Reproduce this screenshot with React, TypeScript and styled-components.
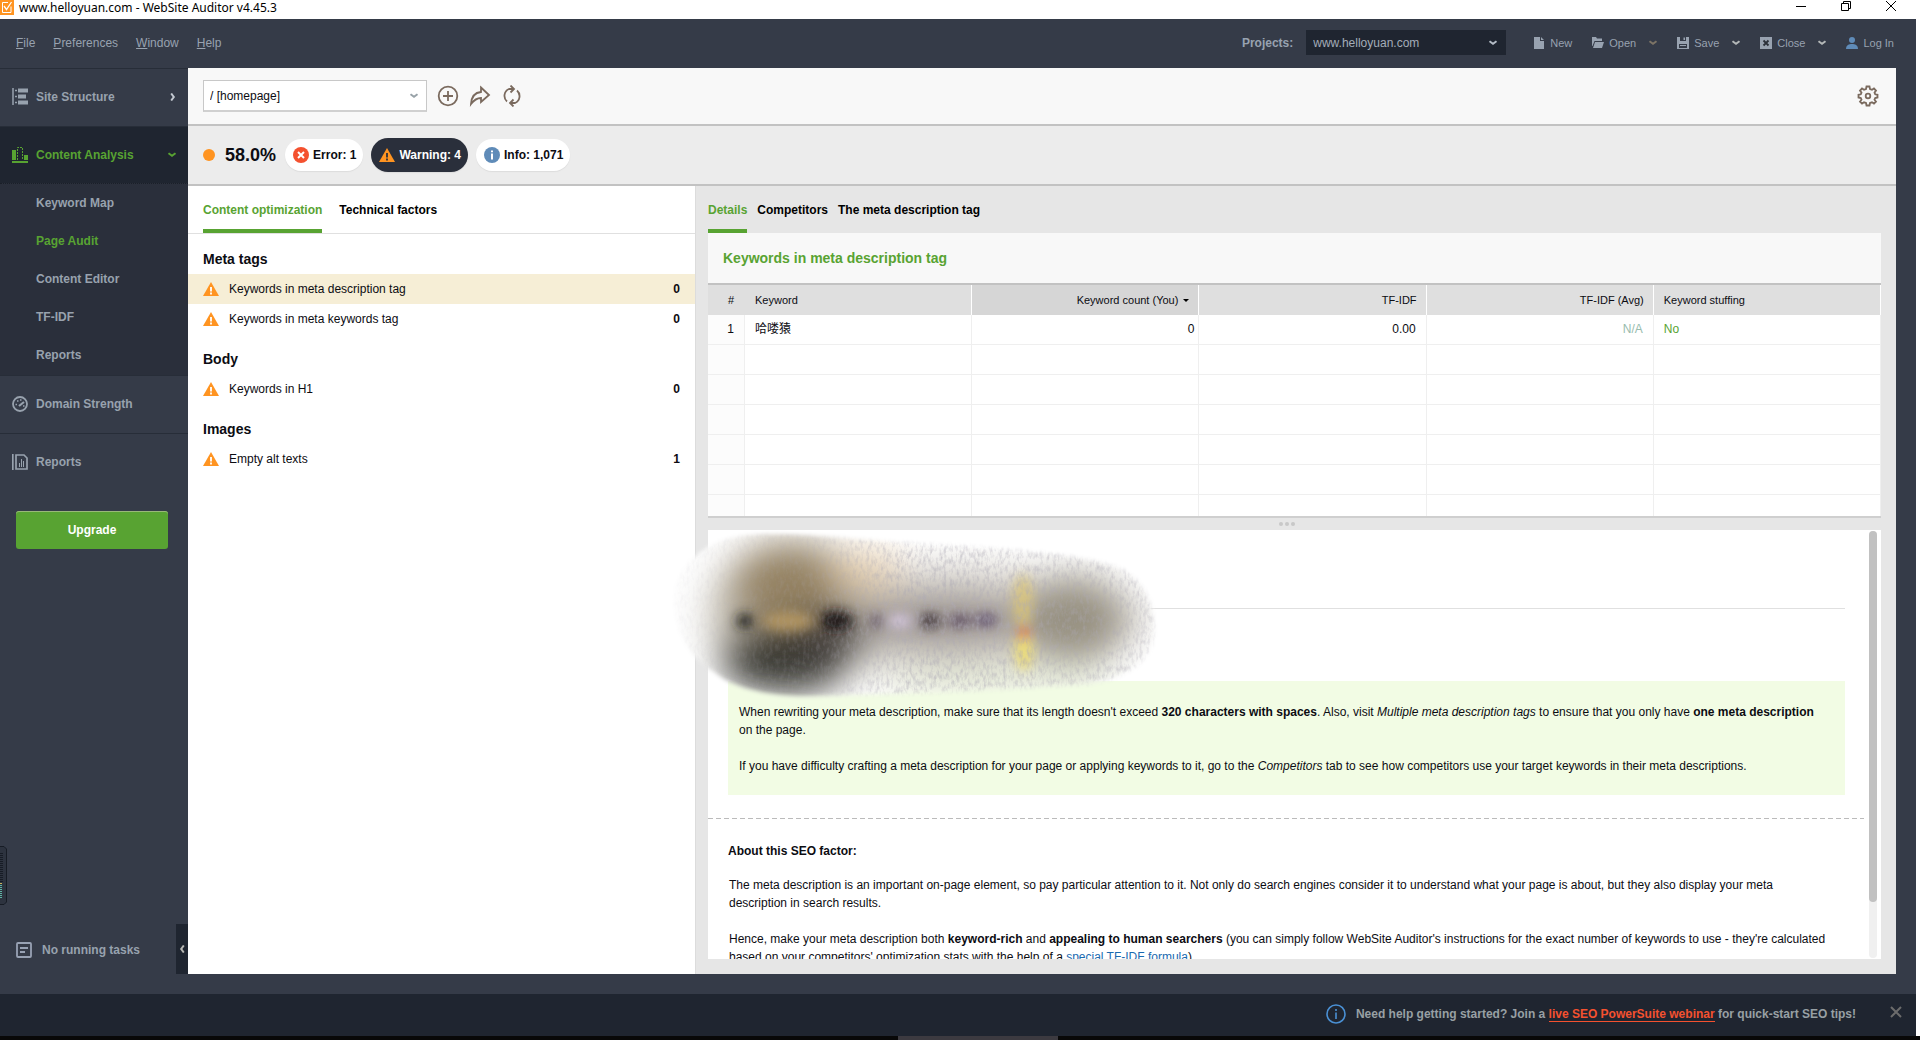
import React from "react";
import styled, { createGlobalStyle, css } from "styled-components";

const Global = createGlobalStyle`
  * { box-sizing: border-box; }
  html, body, #root { height: 100%; }
  body {
    margin: 0;
    font-family: "Liberation Sans", "Noto Sans CJK SC", sans-serif;
    font-size: 12px;
    line-height: 18px;
    color: #0c0c12;
    overflow: hidden;
  }
  button, select { font: inherit; color: inherit; }
  button { background: none; border: 0; padding: 0; cursor: pointer; }
  h2, h3, p { margin: 0; }
`;

const Window = styled.div`
  display: flex;
  flex-direction: column;
  height: 100vh;
  padding-right: 4px;
  background: #fff;
`;

/* ---------- title bar ---------- */
const TitleBar = styled.header`
  display: flex;
  align-items: center;
  flex: none;
  height: 19px;
  padding-bottom: 4px;
  background: #fff;
  font-family: "Noto Sans", sans-serif;
  font-size: 12px;
`;
const AppName = styled.span`
  flex: 1;
  padding-left: 5px;
  color: #000;
`;
const WindowButtons = styled.div`
  display: flex;
  gap: 33px;
  padding: 0 19px 3px 0;
  button { display: flex; }
`;

/* ---------- top bar ---------- */
const Shell = styled.div`
  flex: 1;
  min-height: 0;
  display: flex;
  flex-direction: column;
  background: #353b48;
`;
const TopBar = styled.div`
  flex: none;
  display: flex;
  align-items: center;
  justify-content: space-between;
  height: 49px;
  padding: 0 22px 2px 16px;
  color: #98a2b0;
`;
const Menu = styled.nav`
  display: flex;
  gap: 18px;
  font-size: 12px;
  button::first-letter { text-decoration: underline; }
`;
const TopTools = styled.div`
  display: flex;
  align-items: center;
  gap: 27px;
  font-size: 11px;
`;
const Project = styled.div`
  display: flex;
  align-items: center;
  gap: 13px;
`;
const ProjectLabel = styled.label`
  font-size: 12px;
  font-weight: bold;
`;
const SelectBox = styled.div<{ $dark?: boolean }>`
  position: relative;
  width: ${(p) => (p.$dark ? 200 : 224)}px;
  svg { position: absolute; right: 9px; top: calc(50% - 3px); pointer-events: none; }
  select {
    display: block;
    width: 100%;
    appearance: none;
    outline: none;
    border-radius: 0;
    font-size: 12px;
    ${(p) =>
      p.$dark
        ? css`height: 25px; padding: 0 7px; background: #1f2530; border: 0; color: #a4adb9;`
        : css`height: 32px; padding: 0 6px; background: #fff; border: 1px solid #c8c8c8; border-bottom: 2px solid #d0d0d0;`}
  }
`;
const ToolRow = styled.div`
  display: flex;
  align-items: center;
  gap: 20px;
`;
const ToolGroup = styled.div`
  display: flex;
  align-items: center;
  gap: 13px;
`;
const ToolButton = styled.button`
  display: flex;
  align-items: center;
  gap: 5px;
`;
const BareButton = styled.button`
  display: flex;
`;

/* ---------- body ---------- */
const Body = styled.div`
  flex: 1;
  min-height: 0;
  display: flex;
  padding: 0 20px 20px 0;
`;
const Sidebar = styled.aside`
  position: relative;
  flex: none;
  width: 188px;
  display: flex;
  flex-direction: column;
  color: #98a2ae;
  font-weight: bold;
`;
const NavItem = styled.button<{ $active?: boolean }>`
  flex: none;
  display: flex;
  align-items: center;
  gap: 8px;
  height: 58px;
  padding: 0 12px 2px 12px;
  border-top: 1px solid #272d38;
  font-weight: bold;
  text-align: left;
  span { flex: 1; }
  ${(p) => p.$active && css`background: #1f2530; color: #58a332; height: 57px; padding-bottom: 0;`}
`;
const SubNav = styled.nav`
  display: flex;
  flex-direction: column;
  padding-bottom: 1px;
  background: #2a2f3b;
  border-top: 1px dotted #1a1f28;
`;
const SubItem = styled.button<{ $active?: boolean }>`
  height: 38px;
  padding: 0 0 0 36px;
  font-weight: bold;
  text-align: left;
  color: ${(p) => (p.$active ? "#58a332" : "inherit")};
`;
const Upgrade = styled.button`
  margin: 20px 20px 0 16px;
  height: 38px;
  border-radius: 3px;
  box-shadow: inset 0 1px #98b878;
  background: #58a332;
  color: #fff;
  font-weight: bold;
`;
const SidebarFoot = styled.div`
  display: flex;
  margin-top: auto;
  height: 50px;
`;
const Tasks = styled.div`
  flex: 1;
  display: flex;
  align-items: center;
  gap: 10px;
  padding: 2px 0 0 16px;
`;
const Collapse = styled.button`
  display: flex;
  align-items: center;
  justify-content: center;
  width: 12px;
  background: #1f2530;
`;
const Gadget = styled.svg`
  position: absolute;
  left: 0;
  bottom: 69px;
`;

/* ---------- workspace ---------- */
const Workspace = styled.main`
  flex: 1;
  min-width: 0;
  display: flex;
  flex-direction: column;
  background: #fff;
`;
const Toolbar = styled.div`
  flex: none;
  display: flex;
  align-items: center;
  gap: 10px;
  height: 58px;
  padding: 0 17px 0 15px;
  background: #f8f8f8;
  border-bottom: 2px solid #c2c2c2;
  ${BareButton}:last-child { margin-left: auto; }
`;
const Summary = styled.div`
  flex: none;
  display: flex;
  align-items: center;
  height: 60px;
  padding-left: 15px;
  background: #ececec;
  border-bottom: 2px solid #c2c2c2;
`;
const Dot = styled.i`
  width: 12px;
  height: 12px;
  border-radius: 50%;
  background: #ff9421;
`;
const Score = styled.strong`
  margin: 0 9px 0 10px;
  font-size: 18px;
`;
const Pill = styled.button<{ $dark?: boolean }>`
  display: flex;
  align-items: center;
  gap: 4px;
  height: ${(p) => (p.$dark ? 34 : 32)}px;
  margin-right: 8px;
  padding: 0 7px 0 8px;
  border-radius: 17px;
  font-weight: bold;
  background: ${(p) => (p.$dark ? "#2a2f3b" : "#fff")};
  color: ${(p) => (p.$dark ? "#fff" : "#0c0c12")};
  box-shadow: 0 1px 1px #ddd;
`;
const Columns = styled.div`
  flex: 1;
  min-height: 0;
  display: flex;
`;
const Factors = styled.section`
  flex: none;
  width: 507px;
`;
const Tabs = styled.div<{ $tight?: boolean }>`
  display: flex;
  flex: none;
  gap: ${(p) => (p.$tight ? 10 : 17)}px;
  height: ${(p) => (p.$tight ? 47 : 48)}px;
  padding-left: ${(p) => (p.$tight ? 0 : 15)}px;
  border-bottom: ${(p) => (p.$tight ? "0" : "1px solid #e0e0e0")};
`;
const Tab = styled.button<{ $active?: boolean }>`
  font-weight: bold;
  height: 47px;
  padding-top: 5px;
  color: ${(p) => (p.$active ? "#58a332" : "#000")};
  border-bottom: 4px solid ${(p) => (p.$active ? "#58a332" : "transparent")};
`;
const GroupTitle = styled.h2`
  height: 40px;
  padding: 10px 0 0 15px;
  font-size: 14px;
  line-height: 30px;
`;
const FactorRow = styled.button<{ $active?: boolean }>`
  display: flex;
  align-items: center;
  gap: 10px;
  width: 100%;
  height: 30px;
  padding: 0 15px 1px;
  text-align: left;
  background: ${(p) => (p.$active ? "#f6eed6" : "#fff")};
  span { flex: 1; }
`;
const Details = styled.section`
  flex: 1;
  min-width: 0;
  display: flex;
  flex-direction: column;
  padding: 0 15px 15px 12px;
  background: #e6e6e6;
  border-left: 1px solid #dcdcdc;
`;
const CardTitle = styled.h2`
  flex: none;
  height: 52px;
  padding-left: 15px;
  font-size: 14px;
  line-height: 50px;
  color: #58a332;
  background: #f8f8f8;
  border-bottom: 2px solid #c2c2c2;
`;
const TableWrap = styled.div`
  flex: none;
  height: 233px;
  overflow: hidden;
  background: #fff;
  border-bottom: 2px solid #cfcfcf;
`;
const Grid = styled.table`
  width: 100%;
  table-layout: fixed;
  border-collapse: separate;
  border-spacing: 0;
  th, td {
    height: 30px;
    padding: 0 10px;
    text-align: left;
    border-right: 1px solid #efefef;
  }
  td { padding-bottom: 2px; border-bottom: 1px solid #efefef; }
  th { background: #dfdfdf; font-size: 11px; font-weight: normal; border-right-color: #fff; }
  th:first-child, td:first-child { width: 37px; text-align: right; }
  th:first-child { border-right-color: #dfdfdf; }
  td:first-child { background: #fcfcfc; }
`;
const Num = styled.td<{ $muted?: boolean; $last?: boolean }>`
  && { text-align: right; padding-right: ${(p) => (p.$last ? 4 : 10)}px; color: ${(p) => (p.$muted ? "#98bcae" : "inherit")}; }
`;
const NumHead = styled.th<{ $sorted?: boolean }>`
  && { text-align: right; padding-right: 9px; background: ${(p) => (p.$sorted ? "#d6d6d6" : "#dfdfdf")}; }
  svg { margin-left: 5px; vertical-align: 2px; }
`;
const Good = styled.td`
  color: #58a332;
`;
const Splitter = styled.div`
  flex: none;
  display: flex;
  align-items: center;
  justify-content: center;
  gap: 2px;
  height: 12px;
  padding-right: 15px;
  i { width: 4px; height: 4px; border-radius: 50%; background: #c8c8c8; }
`;
const Advice = styled.div`
  position: relative;
  flex: 1;
  min-height: 0;
  display: flex;
  background: #fff;
`;
const Article = styled.article`
  flex: 1;
  min-width: 0;
  overflow: hidden;
`;
const Lead = styled.div`
  height: 79px;
  margin: 0 19px 72px 20px;
  border-bottom: 1px solid #e0e0e0;
`;
const Tip = styled.div`
  margin: 0 19px 23px 20px;
  padding: 22px 20px 20px 11px;
  background: #f2fce4;
  p + p { margin-top: 18px; }
`;
const About = styled.div`
  padding: 23px 34px 0 20px;
  h3 { font-size: 12px; margin-bottom: 16px; }
  p { padding-left: 1px; margin-bottom: 18px; }
  a { color: #1a6ab0; text-decoration: none; }
`;
const Dashes = styled.hr`
  height: 1px;
  margin: 0;
  border: 0;
  background: repeating-linear-gradient(90deg, #bbb 0 5px, transparent 5px 8px);
`;
const Track = styled.div`
  flex: none;
  width: 8px;
  margin: 1px 4px 1px 5px;
  border-radius: 4px;
  background: #f0f0f0;
`;
const Thumb = styled.div`
  height: 87%;
  border-radius: 4px;
  background: #c1c1c1;
`;
const Smudge = styled.svg`
  position: absolute;
  left: -38px;
  top: 0;
  pointer-events: none;
`;

/* ---------- footer ---------- */
const Footer = styled.footer`
  flex: none;
  display: flex;
  align-items: center;
  justify-content: flex-end;
  gap: 10px;
  height: 42px;
  padding: 0 14px 2px 0;
  background: #1f2530;
  color: #98a0a4;
  font-weight: bold;
  a { color: #f4512f; text-decoration: none; border-bottom: 1px solid #f4512f; }
  button { margin-left: 24px; }
`;
const Dock = styled.div`
  flex: none;
  display: flex;
  justify-content: center;
  height: 4px;
  background: #080808;
  margin-right: -4px;
  padding-left: 36px;
  i { width: 160px; background: #3c3a40; }
`;

/* ---------- icons ---------- */
const Chevron = ({ color = "#98a2ae", dir = "down" }: { color?: string; dir?: "down" | "right" | "left" }) => {
  if (dir === "down") {
    return (
      <svg width="8" height="6" viewBox="0 0 8 6">
        <path d="M0.500 1.200 L4 3.800 L7.500 1.200" fill="none" stroke={color} strokeWidth="2" />
      </svg>
    );
  }
  return (
    <svg width="6" height="8" viewBox="0 0 6 8">
      <path d={dir === "right" ? "M1.200 .5 L3.800 4 L1.200 7.500" : "M4.800 .5 L2.200 4 L4.800 7.500"} fill="none" stroke={color} strokeWidth="2" />
    </svg>
  );
};
const WarnIcon = () => (
  <svg width="16" height="14" viewBox="0 0 16 14">
    <path d="M8 0 L16 14 H0 Z" fill="#ff9421" />
    <path d="M8 5 V9.400 M8 10.600 V12.400" stroke="currentColor" strokeWidth="1.800" />
  </svg>
);

const WarnMark = styled.i<{ $dark?: boolean }>`
  display: flex;
  color: ${(p) => (p.$dark ? "#2a2f3b" : "#fff")};
`;

const AppLogo = () => (
  <svg width="14" height="15" viewBox="0 0 14 15">
    <rect width="14" height="15" fill="#ff9421" />
    <path d="M11 6.500 V12.500 H2.500 V2.500 H8" fill="none" stroke="#fff" />
    <path d="M4 6 L6.500 9.500 L11.500 2" fill="none" stroke="#fff" strokeWidth="1.300" />
  </svg>
);

const emptyRows = [0, 1, 2, 3, 4, 5];
const groups = [
  { title: "Meta tags", rows: [["Keywords in meta description tag", "0"], ["Keywords in meta keywords tag", "0"]] },
  { title: "Body", rows: [["Keywords in H1", "0"]] },
  { title: "Images", rows: [["Empty alt texts", "1"]] },
];

export default function App() {
  return (
    <Window>
      <Global />
      <TitleBar>
        <AppLogo />
        <AppName>www.helloyuan.com - WebSite Auditor v4.45.3</AppName>
        <WindowButtons>
          <button aria-label="Minimize">
            <svg width="12" height="12"><path d="M1 6.500 H11" stroke="#000" /></svg>
          </button>
          <button aria-label="Restore">
            <svg width="12" height="12"><path d="M1.500 3.500 H8.500 V10.500 H1.500 Z M3.500 3 V1.500 H10.500 V8.500 H9" fill="none" stroke="#000" /></svg>
          </button>
          <button aria-label="Close window">
            <svg width="12" height="12"><path d="M1 1 L11 11 M11 1 L1 11" stroke="#000" /></svg>
          </button>
        </WindowButtons>
      </TitleBar>

      <Shell>
        <TopBar>
          <Menu>
            <button>File</button>
            <button>Preferences</button>
            <button>Window</button>
            <button>Help</button>
          </Menu>
          <TopTools>
            <Project>
              <ProjectLabel htmlFor="project">Projects:</ProjectLabel>
              <SelectBox $dark>
                <select id="project"><option>www.helloyuan.com</option></select>
                <Chevron color="#b4bcc6" />
              </SelectBox>
            </Project>
            <ToolRow>
              <ToolButton>
                <svg width="12" height="12" viewBox="0 0 12 12"><path d="M1 0 H7 V4 H11 V12 H1 Z M8 0 L11 3 H8 Z" fill="#98a2b0" /></svg>
                New
              </ToolButton>
              <ToolGroup>
                <ToolButton>
                  <svg width="12" height="11" viewBox="0 0 12 11"><path d="M0 0 H4 L5 1.500 H10 V4 H2.500 L0.500 9 H0 Z M3 5 H12 L10 11 H1 Z" fill="#98a2b0" /></svg>
                  Open
                </ToolButton>
                <BareButton aria-label="Open recent"><Chevron color="#7d7466" /></BareButton>
              </ToolGroup>
              <ToolGroup>
                <ToolButton>
                  <svg width="12" height="12" viewBox="0 0 12 12"><path fillRule="evenodd" d="M0 0 H12 V12 H0 Z M2 7 V11 H10 V7 Z M3 0 V4 H9 V0 Z" fill="#98a2b0" /><path d="M6.500 .5 H8 V3 H6.500 Z M3 8 H9 V9 H3 Z" fill="#98a2b0" /></svg>
                  Save
                </ToolButton>
                <BareButton aria-label="Save options"><Chevron color="#b4b8b8" /></BareButton>
              </ToolGroup>
              <ToolGroup>
                <ToolButton>
                  <svg width="12" height="12" viewBox="0 0 12 12"><rect width="12" height="12" fill="#98a2b0" /><path d="M3.500 3.500 L8.500 8.500 M8.500 3.500 L3.500 8.500" stroke="#2b3039" strokeWidth="1.800" /></svg>
                  Close
                </ToolButton>
                <BareButton aria-label="Close options"><Chevron color="#b4b8b8" /></BareButton>
              </ToolGroup>
              <ToolButton>
                <svg width="12" height="12" viewBox="0 0 12 12"><circle cx="6" cy="3" r="3" fill="#5f8bb8" /><path d="M0 12 C0 8 3 7 6 7 S12 8 12 12 Z" fill="#5f8bb8" /></svg>
                Log In
              </ToolButton>
            </ToolRow>
          </TopTools>
        </TopBar>

        <Body>
          <Sidebar>
            <NavItem>
              <svg width="16" height="17" viewBox="0 0 16 17"><path d="M1 0 V17 M3 2.500 H5 M3 8.500 H5 M3 14.500 H5" stroke="#98a2ae" strokeWidth="1.500" /><path d="M6 .5 H16 V4.500 H6 Z M6 6.500 H14 V10.500 H6 Z M6 12.500 H16 V16.500 H6 Z" fill="#98a2ae" /></svg>
              <span>Site Structure</span>
              <Chevron color="#c4cad2" dir="right" />
            </NavItem>
            <NavItem $active>
              <svg width="16" height="16" viewBox="0 0 16 16"><path d="M0 3 H4 V13 H0 Z M12 8 H16 V13 H12 Z M0 14 H16 V16 H0 Z" fill="#58a332" /><path d="M5.500 13 V.5 H10.500 V13" fill="none" stroke="#58a332" strokeDasharray="2 1" /></svg>
              <span>Content Analysis</span>
              <Chevron color="#58a332" />
            </NavItem>
            <SubNav>
              <SubItem>Keyword Map</SubItem>
              <SubItem $active>Page Audit</SubItem>
              <SubItem>Content Editor</SubItem>
              <SubItem>TF-IDF</SubItem>
              <SubItem>Reports</SubItem>
            </SubNav>
            <NavItem>
              <svg width="16" height="16" viewBox="0 0 16 16"><circle cx="8" cy="8" r="7" fill="none" stroke="#98a2ae" strokeWidth="1.800" /><path d="M7 10 L12 6" stroke="#98a2ae" strokeWidth="2.200" /><path d="M3.500 8.500 h1.500 M5 5 h1.500 M8 4 h1.500 M11 10 h1.500" stroke="#98a2ae" strokeWidth="1.400" /></svg>
              <span>Domain Strength</span>
            </NavItem>
            <NavItem>
              <svg width="16" height="16" viewBox="0 0 16 16"><path d="M.8 0 V16 M4 1 H12 L15 4 V15 H4 Z" fill="none" stroke="#98a2ae" strokeWidth="1.700" /><path d="M7.500 9 V13 M9.500 5 V13 M11.500 7 V13" stroke="#98a2ae" /></svg>
              <span>Reports</span>
            </NavItem>
            <Upgrade>Upgrade</Upgrade>
            <Gadget width="8" height="59" viewBox="0 0 8 59">
              <path d="M0 .5 H4 L6.500 3 V56 L4 58.500 H0" fill="#2d333f" stroke="#171c25" />
              <path d="M1.500 7 V37" stroke="#171c25" strokeWidth="3" strokeDasharray="1 1" />
              <path d="M1 39 V53" stroke="#5fb3a4" strokeWidth="2" strokeDasharray="1 1" />
              <path d="M0 37.500 H2" stroke="#c8b45a" />
            </Gadget>
            <SidebarFoot>
              <Tasks>
                <svg width="16" height="16" viewBox="0 0 16 16"><rect x="1" y="1" width="14" height="14" rx="1" fill="none" stroke="#98a2b4" strokeWidth="1.800" /><path d="M4 6 H12 M4 10 H9" stroke="#98a2b4" strokeWidth="1.800" /></svg>
                No running tasks
              </Tasks>
              <Collapse aria-label="Collapse sidebar"><Chevron color="#b8b8b4" dir="left" /></Collapse>
            </SidebarFoot>
          </Sidebar>

          <Workspace>
            <Toolbar>
              <SelectBox>
                <select aria-label="Page"><option>/ [homepage]</option></select>
                <Chevron color="#98a2a8" />
              </SelectBox>
              <BareButton aria-label="Add page">
                <svg width="22" height="22" viewBox="0 0 22 22" fill="none" stroke="#7a6a5e" strokeWidth="1.800"><circle cx="11" cy="11" r="9.300" /><path d="M11 6 V16 M6 11 H16" /></svg>
              </BareButton>
              <BareButton aria-label="Share">
                <svg width="22" height="22" viewBox="0 0 22 22" fill="none" stroke="#7a6a5e" strokeWidth="1.800"><path d="M12 2.500 L20 10 L12 17 V13 C8 13 5 15 2 19 C2.500 12 6 7.500 12 7 Z" /></svg>
              </BareButton>
              <BareButton aria-label="Refresh">
                <svg width="22" height="22" viewBox="0 0 22 22" fill="none" stroke="#7a6a5e" strokeWidth="1.800"><path d="M6 16.500 A7.500 7.500 0 0 1 8 4 L12 4 M16 5.500 A7.500 7.500 0 0 1 14 18 L10 18" /><path d="M9.500 .5 L13 4 L9.500 7.500 M12.500 14.500 L9 18 L12.500 21.500" /></svg>
              </BareButton>
              <BareButton aria-label="Settings">
                <svg width="22" height="22" viewBox="0 0 22 22" fill="none" stroke="#7a6a5e" strokeWidth="1.800"><path d="M9.500 1.500 H12.500 L13 4 L15 4.800 L17 3.500 L19 5.500 L17.500 7.700 L18.200 9.300 L20.500 9.800 V12.500 L18.200 13 L17.500 14.700 L19 16.700 L17 18.700 L15 17.300 L13 18 L12.500 20.500 H9.500 L9 18 L7 17.300 L5 18.700 L3 16.700 L4.500 14.700 L3.800 13 L1.500 12.500 V9.800 L3.800 9.300 L4.500 7.700 L3 5.500 L5 3.500 L7 4.800 L9 4 Z" /><circle cx="11" cy="11" r="2.300" /></svg>
              </BareButton>
            </Toolbar>
            <Summary>
              <Dot />
              <Score>58.0%</Score>
              <Pill>
                <svg width="16" height="16" viewBox="0 0 16 16"><circle cx="8" cy="8" r="8" fill="#f4512f" /><path d="M5 5 L11 11 M11 5 L5 11" stroke="#fff" strokeWidth="2" /></svg>
                Error: 1
              </Pill>
              <Pill $dark><WarnMark $dark><WarnIcon /></WarnMark>Warning: 4</Pill>
              <Pill>
                <svg width="16" height="16" viewBox="0 0 16 16"><circle cx="8" cy="8" r="8" fill="#5f8bb8" /><path d="M8 3.500 V5.300 M8 6.500 V12.500" stroke="#fff" strokeWidth="2" /></svg>
                Info: 1,071
              </Pill>
            </Summary>

            <Columns>
              <Factors>
                <Tabs>
                  <Tab $active>Content optimization</Tab>
                  <Tab>Technical factors</Tab>
                </Tabs>
                {groups.map((g, gi) => (
                  <React.Fragment key={g.title}>
                    <GroupTitle>{g.title}</GroupTitle>
                    {g.rows.map(([name, count], i) => (
                      <FactorRow key={name} $active={gi === 0 && i === 0}>
                        <WarnMark><WarnIcon /></WarnMark>
                        <span>{name}</span>
                        <strong>{count}</strong>
                      </FactorRow>
                    ))}
                  </React.Fragment>
                ))}
              </Factors>

              <Details>
                <Tabs $tight>
                  <Tab $active>Details</Tab>
                  <Tab>Competitors</Tab>
                  <Tab>The meta description tag</Tab>
                </Tabs>
                <CardTitle>Keywords in meta description tag</CardTitle>
                <TableWrap>
                  <Grid>
                    <thead>
                      <tr>
                        <th>#</th>
                        <th>Keyword</th>
                        <NumHead $sorted>Keyword count (You)<svg width="6" height="3"><path d="M0 0 H6 L3 3 Z" /></svg></NumHead>
                        <NumHead>TF-IDF</NumHead>
                        <NumHead>TF-IDF (Avg)</NumHead>
                        <th>Keyword stuffing</th>
                      </tr>
                    </thead>
                    <tbody>
                      <tr>
                        <td>1</td>
                        <td>哈喽猿</td>
                        <Num $last>0</Num>
                        <Num>0.00</Num>
                        <Num $muted>N/A</Num>
                        <Good>No</Good>
                      </tr>
                      {emptyRows.map((r) => (
                        <tr key={r}><td /><td /><td /><td /><td /><td /></tr>
                      ))}
                    </tbody>
                  </Grid>
                </TableWrap>
                <Splitter><i /><i /><i /></Splitter>
                <Advice>
                  <Article>
                    <Lead />
                    <Tip>
                      <p>
                        When rewriting your meta description, make sure that its length doesn't exceed <b>320 characters with spaces</b>. Also, visit <i>Multiple meta description tags</i> to ensure that you only have <b>one meta description</b> on the page.
                      </p>
                      <p>
                        If you have difficulty crafting a meta description for your page or applying keywords to it, go to the <i>Competitors</i> tab to see how competitors use your target keywords in their meta descriptions.
                      </p>
                    </Tip>
                    <Dashes />
                    <About>
                      <h3>About this SEO factor:</h3>
                      <p>
                        The meta description is an important on-page element, so pay particular attention to it. Not only do search engines consider it to understand what your page is about, but they also display your meta description in search results.
                      </p>
                      <p>
                        Hence, make your meta description both <b>keyword-rich</b> and <b>appealing to human searchers</b> (you can simply follow WebSite Auditor's instructions for the exact number of keywords to use - they're calculated based on your competitors' optimization stats with the help of a <a href="#formula">special TF-IDF formula</a>).
                      </p>
                    </About>
                  </Article>
                  <Track><Thumb /></Track>
                  <Smudge width="490" height="172" viewBox="0 0 490 172">
                    <defs>
                      <filter id="soft" filterUnits="userSpaceOnUse" x="-60" y="-60" width="610" height="290"><feGaussianBlur stdDeviation="18" /></filter>
                      <filter id="mid" filterUnits="userSpaceOnUse" x="0" y="0" width="490" height="172"><feGaussianBlur stdDeviation="6" /></filter>
                      <filter id="edge" filterUnits="userSpaceOnUse" x="-10" y="-10" width="510" height="190"><feGaussianBlur stdDeviation="2" /></filter>
                      <filter id="grain" x="0" y="0" width="100%" height="100%">
                        <feTurbulence type="fractalNoise" baseFrequency="0.3 0.14" numOctaves="3" seed="7" />
                        <feColorMatrix values="0 0 0 0 0.42  0 0 0 0 0.4  0 0 0 0 0.46  0 2.400 0 0 -1" />
                        <feComposite in2="SourceGraphic" operator="in" />
                      </filter>
                      <linearGradient id="fade">
                        <stop offset="0" stopColor="#fff" stopOpacity=".1" />
                        <stop offset=".3" stopColor="#fff" stopOpacity=".3" />
                        <stop offset=".5" stopColor="#fff" stopOpacity=".9" />
                        <stop offset="1" stopColor="#fff" stopOpacity=".6" />
                      </linearGradient>
                      <mask id="right">
                        <rect width="490" height="172" fill="url(#fade)" />
                      </mask>
                      <mask id="shape">
                        <path d="M75 5 C130 0 200 12 270 15 C340 19 420 24 454 40 C478 54 486 80 484 105 C480 134 455 148 420 154 C330 160 260 163 150 166 C100 168 62 158 44 142 C12 123 2 90 5 62 C10 32 37 10 75 5 Z" fill="#fff" filter="url(#edge)" />
                      </mask>
                    </defs>
                    <g mask="url(#shape)">
                      <rect width="490" height="172" fill="#fdfdfd" />
                      <g filter="url(#soft)">
                        <ellipse cx="265" cy="88" rx="210" ry="52" fill="#d9d5ce" />
                        <ellipse cx="125" cy="85" rx="84" ry="76" fill="#bcb6a8" />
                        <ellipse cx="118" cy="56" rx="54" ry="42" fill="#948262" />
                        <ellipse cx="196" cy="40" rx="36" ry="20" fill="#e6cca6" opacity=".8" />
                        <ellipse cx="116" cy="128" rx="66" ry="34" fill="#34362f" />
                        <ellipse cx="160" cy="106" rx="42" ry="26" fill="#45403c" />
                        <ellipse cx="275" cy="90" rx="90" ry="28" fill="#9c9490" />
                        <ellipse cx="402" cy="90" rx="56" ry="44" fill="#989282" />
                        <ellipse cx="330" cy="154" rx="120" ry="12" fill="#e2ead0" />
                      </g>
                      <g filter="url(#mid)">
                        <ellipse cx="75" cy="91" rx="9" ry="7" fill="#20231e" />
                        <ellipse cx="118" cy="91" rx="26" ry="10" fill="#b09462" />
                        <ellipse cx="166" cy="91" rx="17" ry="10" fill="#1c1516" />
                        <ellipse cx="207" cy="91" rx="6" ry="6" fill="#5c4c60" />
                        <ellipse cx="230" cy="91" rx="12" ry="7" fill="#d4c6de" />
                        <ellipse cx="260" cy="91" rx="11" ry="7" fill="#3c3238" />
                        <ellipse cx="290" cy="91" rx="12" ry="6" fill="#5c4c60" />
                        <ellipse cx="316" cy="90" rx="11" ry="6" fill="#5a4a6a" />
                        <ellipse cx="353" cy="72" rx="10" ry="28" fill="#dcc678" opacity=".8" />
                        <ellipse cx="354" cy="120" rx="9" ry="20" fill="#ecdc78" />
                        <circle cx="354" cy="103" r="6" fill="#e0583c" />
                      </g>
                      <g mask="url(#right)">
                        <rect width="490" height="172" filter="url(#grain)" opacity=".6" />
                      </g>
                    </g>
                  </Smudge>
                </Advice>
              </Details>
            </Columns>
          </Workspace>
        </Body>

        <Footer>
          <svg width="20" height="20" viewBox="0 0 20 20" fill="none" stroke="#4a90d4"><circle cx="10" cy="10" r="9" strokeWidth="1.600" /><path d="M10 5 V7 M10 8.500 V15" strokeWidth="1.600" /></svg>
          <span>
            Need help getting started? Join a <a href="#webinar">live SEO PowerSuite webinar</a> for quick-start SEO tips!
          </span>
          <button aria-label="Dismiss">
            <svg width="12" height="12" viewBox="0 0 12 12"><path d="M1 1 L11 11 M11 1 L1 11" stroke="#6c6c6c" strokeWidth="2" /></svg>
          </button>
        </Footer>
      </Shell>
      <Dock><i /></Dock>
    </Window>
  );
}
